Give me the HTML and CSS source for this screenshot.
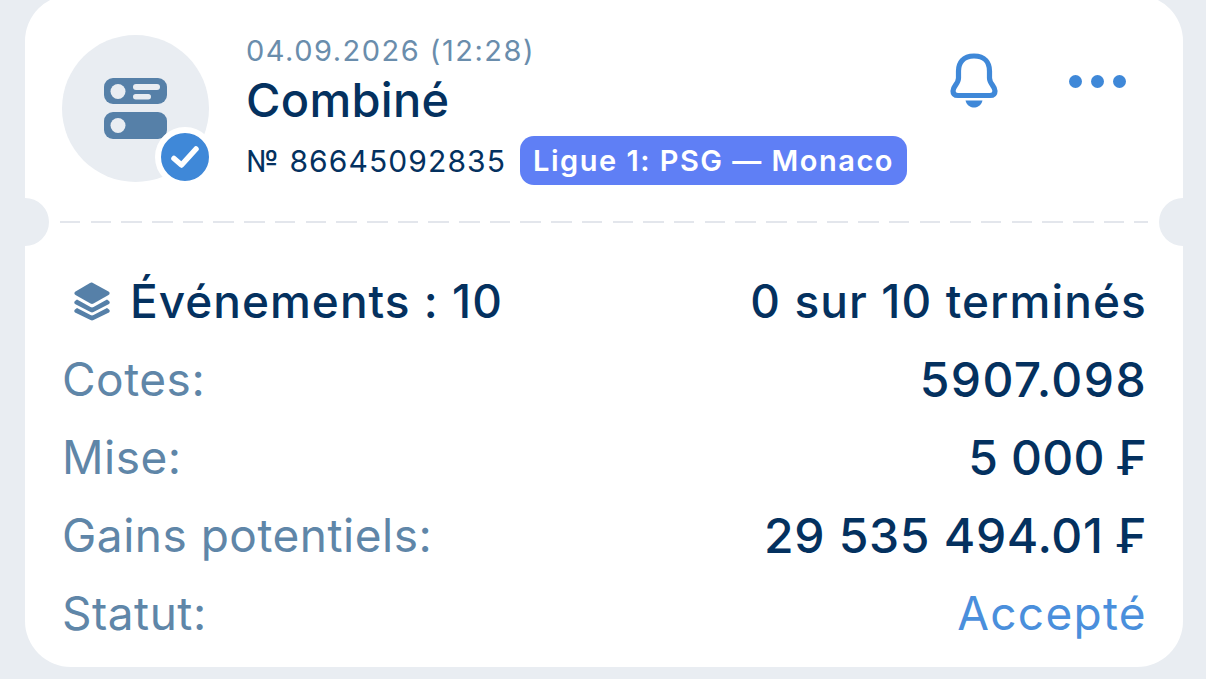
FILE: index.html
```html
<!DOCTYPE html>
<html>
<head>
  <title>Combiné</title>
  <link rel="stylesheet" href="styles.css">
</head>
<body>
  <div class="card">
    <div class="card-head">
      <div class="avatar">
        <svg class="avatar-icon" width="63" height="61" viewBox="0 0 63 61">
          <rect x="0" y="0" width="63" height="26" rx="9" fill="#5680a8"/>
          <circle cx="14" cy="13.500" r="7.500" fill="#e9edf2"/>
          <rect x="29" y="6" width="27" height="6" rx="3" fill="#e9edf2"/>
          <rect x="29" y="16" width="18" height="5.500" rx="2.750" fill="#e9edf2"/>
          <rect x="0" y="34" width="63" height="27" rx="9" fill="#5680a8"/>
          <circle cx="14" cy="47.500" r="7.500" fill="#e9edf2"/>
        </svg>
        <div class="avatar-badge">
          <svg width="30" height="26" viewBox="0 0 30 26">
            <path d="M4 14.500 L11.500 21 L26 5" fill="none" stroke="#fff" stroke-width="5.500" stroke-linecap="round" stroke-linejoin="round"/>
          </svg>
        </div>
      </div>
      <div class="head-info">
        <div class="head-date">04.09.2026 (12:28)</div>
        <div class="head-title">Combiné</div>
        <div class="head-meta">
          <span class="head-number">№ 86645092835</span>
          <span class="pill">Ligue 1: PSG — Monaco</span>
        </div>
      </div>
      <div class="head-actions">
        <svg width="48" height="56" viewBox="0 0 48 56">
          <path d="M24 3 C13 3 8.500 10 8.500 18 L8.500 25 C8.500 31 3 33 3 38 C3 41 5 42.500 8 42.500 L40 42.500 C43 42.500 45 41 45 38 C45 33 39.500 31 39.500 25 L39.500 18 C39.500 10 35 3 24 3 Z" fill="none" stroke="#3f88d8" stroke-width="5.200" stroke-linejoin="round"/>
          <path d="M15.500 47.500 L32.500 47.500 C31 53 27 54.500 24 54.500 C21 54.500 17 53 15.500 47.500 Z" fill="#3f88d8"/>
        </svg>
        <div class="dots"><span></span><span></span><span></span></div>
      </div>
    </div>

    <div class="divider"></div>
    <div class="notch notch-left"></div>
    <div class="notch notch-right"></div>

    <div class="card-body">
      <div class="row row-head">
        <span class="row-events">
          <svg width="40" height="40" viewBox="0 0 40 40">
            <path d="M20 1.500 L36.500 10.500 C38 11.500 38 13 36.500 14 L21.500 22.500 C20.500 23 19.500 23 18.500 22.500 L3.500 14 C2 13 2 11.500 3.500 10.500 L18 2 C19 1.500 19.500 1.500 20 1.500 Z" fill="#5680a8"/>
            <path d="M5 18.500 L18.500 26 C19.500 26.500 20.500 26.500 21.500 26 L35 18.500 L37 20 C38 21 38 22 37 23 L21.500 31 C20.500 31.500 19.500 31.500 18.500 31 L3 23 C2 22 2 21 3 20 Z" fill="#5680a8"/>
            <path d="M5 27 L18.500 34 C19.500 34.500 20.500 34.500 21.500 34 L35 27 L37 28.500 C38 29.500 38 30.500 37 31.500 L21.500 39 C20.500 39.500 19.500 39.500 18.500 39 L3 31.500 C2 30.500 2 29.500 3 28.500 Z" fill="#5680a8"/>
          </svg>
          Événements : 10
        </span>
        <span class="row-value">0 sur 10 terminés</span>
      </div>
      <div class="row">
        <span class="row-label">Cotes:</span>
        <span class="row-value value-odds">5907.098</span>
      </div>
      <div class="row">
        <span class="row-label">Mise:</span>
        <span class="row-value value-stake">5 000 ₣</span>
      </div>
      <div class="row">
        <span class="row-label">Gains potentiels:</span>
        <span class="row-value value-wide">29 535 494.01 ₣</span>
      </div>
      <div class="row">
        <span class="row-label">Statut:</span>
        <span class="row-value status-ok">Accepté</span>
      </div>
    </div>
  </div>
</body>
</html>
```

FILE: styles.css
```css
html, body {
  height: 100%;
}

body {
  margin: 0;
  padding: 0;
  overflow: hidden;
  background-color: #e9edf2;
  font-family: Inter, "Liberation Sans", sans-serif;
  color: #04315f;
}

.card {
  position: relative;
  box-sizing: border-box;
  height: 672px;
  margin: -5px 23px 0 25px;
  background-color: #fff;
  border-radius: 46px;
}

.card-head {
  display: flex;
  align-items: flex-start;
  height: 226px;
  box-sizing: border-box;
  padding: 40px 57px 0 37px;
}

.avatar {
  position: relative;
  display: flex;
  align-items: center;
  justify-content: center;
  flex-shrink: 0;
  width: 147px;
  height: 147px;
  border-radius: 50%;
  background-color: #e9edf2;
}

.avatar-badge {
  position: absolute;
  right: -6px;
  bottom: -5px;
  display: flex;
  align-items: center;
  justify-content: center;
  width: 48px;
  height: 48px;
  border: 6px solid #fff;
  border-radius: 50%;
  background-color: #3f88d8;
}

.head-info {
  flex: 1;
  margin-left: 37px;
  margin-top: -2px;
}

.head-date {
  font-size: 29px;
  line-height: 36px;
  letter-spacing: 1.500px;
  color: #6a8dac;
}

.head-title {
  font-size: 47px;
  font-weight: 500;
  line-height: 62px;
  letter-spacing: 0.300px;
}

.head-meta {
  display: flex;
  align-items: center;
  gap: 14px;
  margin-top: 5px;
}

.head-number {
  font-size: 30px;
  letter-spacing: 1.100px;
}

.pill {
  height: 49px;
  line-height: 49px;
  padding: 0 13px;
  border-radius: 14px;
  background-color: #5f7ff5;
  color: #fff;
  font-size: 29px;
  font-weight: 600;
  letter-spacing: 1.500px;
}

.head-actions {
  display: flex;
  align-items: center;
  gap: 71px;
  margin-top: 18px;
}

.dots {
  display: flex;
  gap: 9px;
}

.dots span {
  width: 13px;
  height: 13px;
  border-radius: 50%;
  background-color: #3f88d8;
}

.divider {
  height: 2px;
  margin: 0 35px;
  background-image: repeating-linear-gradient(to right, #e3e6ec 0, #e3e6ec 20.500px, transparent 20.500px, transparent 30.700px);
}

.notch {
  position: absolute;
  top: 203px;
  width: 48px;
  height: 48px;
  border-radius: 50%;
  background-color: #e9edf2;
}

.notch-left {
  left: -24px;
  clip-path: inset(0 0 0 24px);
}

.notch-right {
  right: -24px;
  clip-path: inset(0 24px 0 0);
}

.card-body {
  padding: 39px 36px 0 37px;
}

.row {
  display: flex;
  justify-content: space-between;
  align-items: center;
  height: 78px;
  font-size: 46px;
}

.row-events {
  display: flex;
  align-items: center;
  gap: 18px;
  margin-left: 10px;
  font-weight: 500;
  letter-spacing: 1px;
}

.row-label {
  color: #5f86a8;
  letter-spacing: 0.500px;
}

.row-value {
  font-weight: 500;
  letter-spacing: 1.100px;
}

.value-odds {
  font-size: 48px;
  letter-spacing: 1.400px;
}

.value-stake {
  font-size: 48px;
  letter-spacing: 0.200px;
}

.value-wide {
  font-size: 48px;
  letter-spacing: 0.700px;
}

.status-ok {
  color: #4a8fdc;
  font-weight: 400;
  letter-spacing: 1.300px;
}
```
